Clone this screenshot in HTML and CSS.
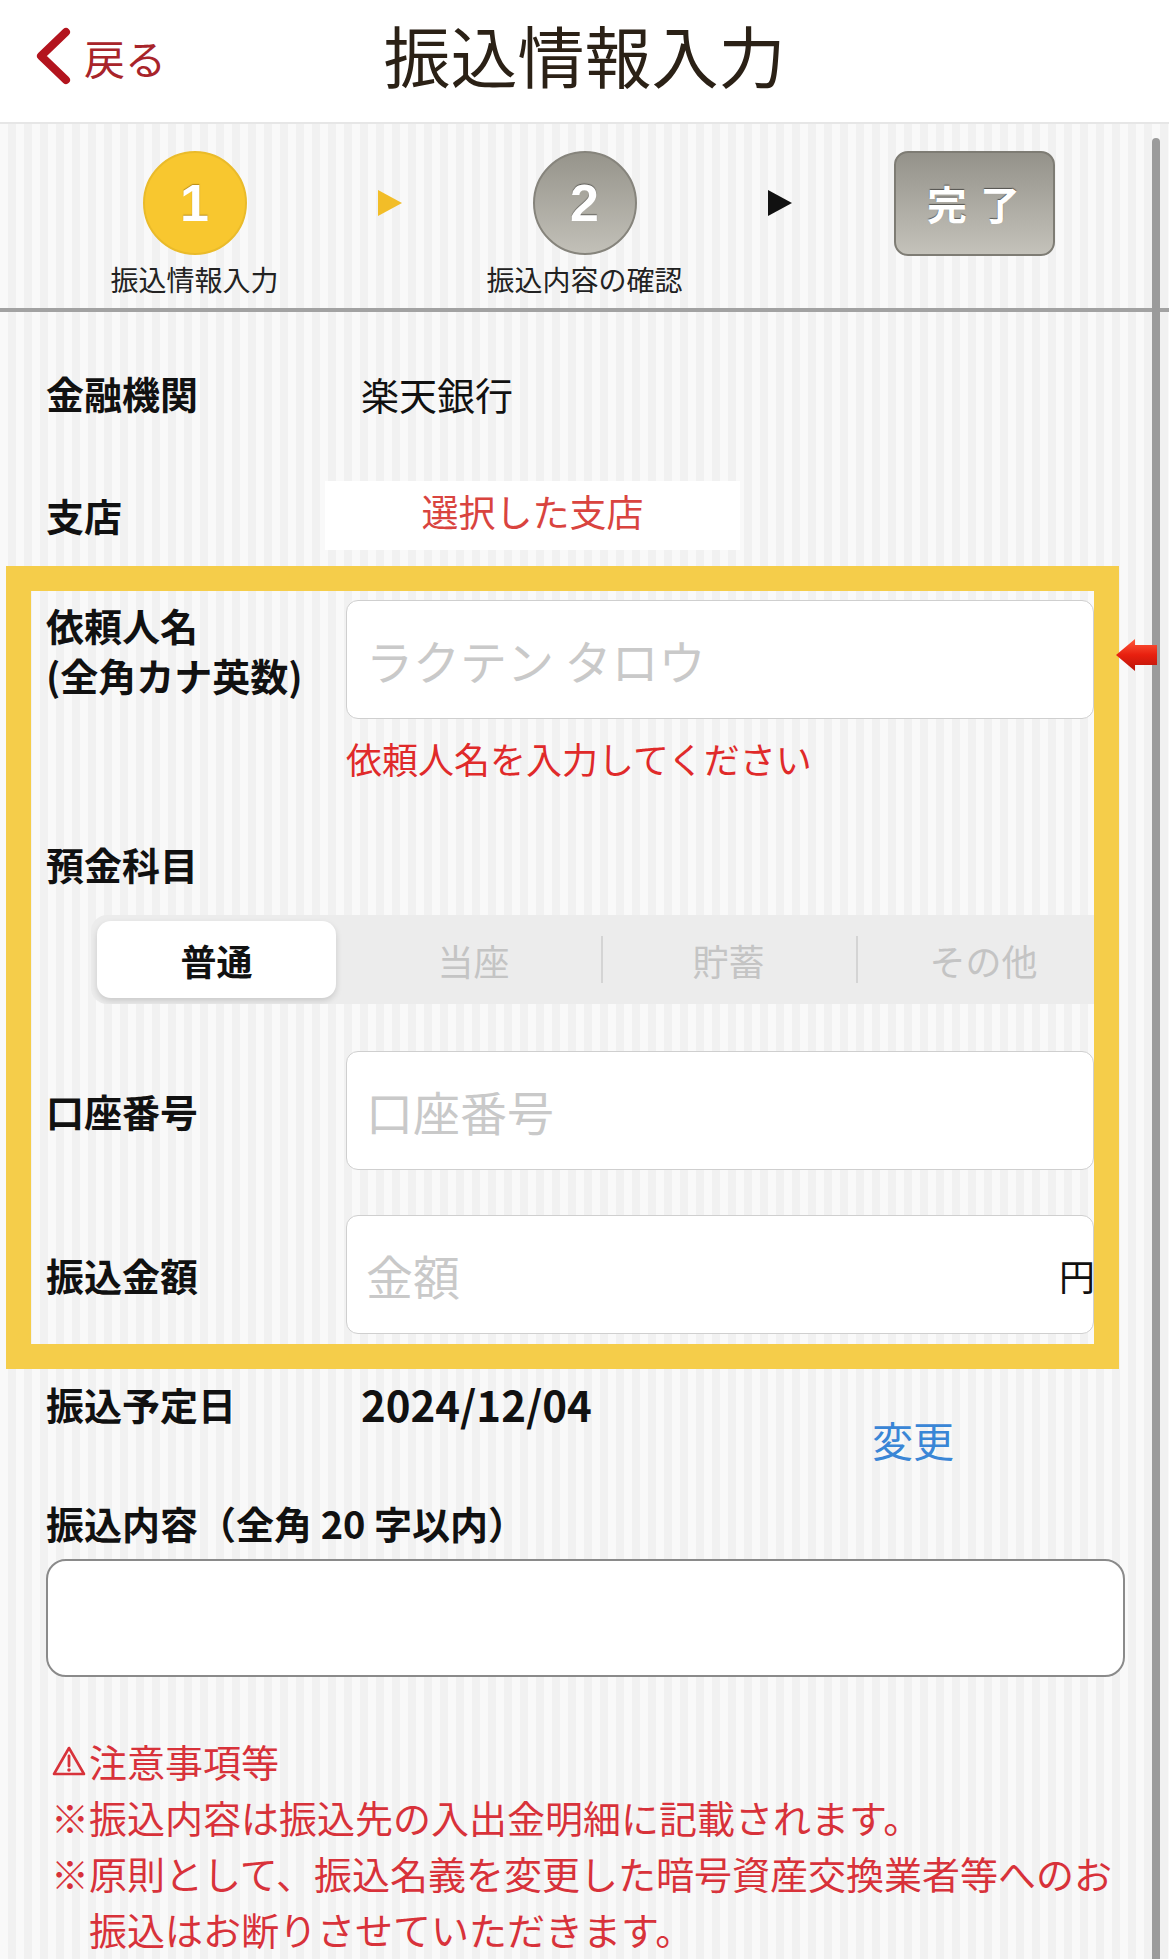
FILE: index.html
```html
<!DOCTYPE html>
<html lang="ja">
<head>
    <meta charset="UTF-8">
    <meta name="viewport" content="width=device-width, initial-scale=1.0">
    <title>振込情報入力</title>
    <link rel="stylesheet" href="styles.css">
</head>
<body>
    <header class="topbar">
        <a class="back" href="#">
            <svg class="back-icon" width="40" height="60" viewBox="0 0 40 60">
                <path d="M32 5 L7 29 L32 53" fill="none" stroke="#b3141e" stroke-width="8" stroke-linecap="round" stroke-linejoin="round"/>
            </svg>
            <span>戻る</span>
        </a>
        <h1 class="title">振込情報入力</h1>
        <div></div>
    </header>

    <div class="page">
        <div class="scrollbar"></div>

        <nav class="steps">
            <div class="step">
                <div class="step-circle current">1</div>
                <div class="step-label">振込情報入力</div>
            </div>
            <div class="step-arrow"><span class="tri current"></span></div>
            <div class="step">
                <div class="step-circle">2</div>
                <div class="step-label">振込内容の確認</div>
            </div>
            <div class="step-arrow"><span class="tri"></span></div>
            <div class="step">
                <div class="step-done">完&nbsp;了</div>
            </div>
        </nav>

        <main class="form">
            <div class="row">
                <div class="label">金融機関</div>
                <div class="value">楽天銀行</div>
            </div>
            <div class="row branch-row">
                <div class="label">支店</div>
                <div class="branch">選択した支店</div>
            </div>

            <section class="highlight">
                <svg class="pointer" width="44" height="34" viewBox="0 0 44 34">
                    <defs>
                        <linearGradient id="arrowFill" x1="0" y1="0" x2="0" y2="1">
                            <stop offset="0" stop-color="#ff5a3c"/>
                            <stop offset="0.5" stop-color="#e8200f"/>
                            <stop offset="1" stop-color="#b8140a"/>
                        </linearGradient>
                    </defs>
                    <path d="M1 17 L20 1 L20 7 L42 7 L42 27 L20 27 L20 33 Z" fill="url(#arrowFill)"/>
                </svg>

                <div class="irow name-row">
                    <div class="label">依頼人名<br>(全角カナ英数)</div>
                    <input class="field" type="text" placeholder="ラクテン タロウ">
                </div>
                <p class="error">依頼人名を入力してください</p>

                <div class="label type-label">預金科目</div>
                <div class="seg-wrap">
                    <div class="segmented">
                        <div class="seg selected">普通</div>
                        <div class="seg">当座</div>
                        <div class="seg sep">貯蓄</div>
                        <div class="seg sep">その他</div>
                    </div>
                </div>

                <div class="irow account-row">
                    <div class="label">口座番号</div>
                    <input class="field" type="text" placeholder="口座番号">
                </div>
                <div class="irow amount-row">
                    <div class="label">振込金額</div>
                    <div class="field amount">
                        <input type="text" placeholder="金額">
                        <span class="yen">円</span>
                    </div>
                </div>
            </section>

            <div class="row date-row">
                <div class="label">振込予定日</div>
                <div class="date">2024/12/04</div>
                <a class="change" href="#">変更</a>
            </div>

            <div class="label memo-label">振込内容（全角 20 字以内）</div>
            <textarea class="memo"></textarea>

            <div class="notes">
                <p class="notes-title">
                    <svg width="36" height="32" viewBox="0 0 36 32">
                        <path d="M18 3 L33 29 L3 29 Z" fill="none" stroke="#d8323a" stroke-width="2.6" stroke-linejoin="round"/>
                        <path d="M18 11 L18 21" stroke="#d8323a" stroke-width="2.8" stroke-linecap="round"/>
                        <circle cx="18" cy="25" r="1.8" fill="#d8323a"/>
                    </svg>注意事項等
                </p>
                <p class="note">※振込内容は振込先の入出金明細に記載されます。</p>
                <p class="note">※原則として、振込名義を変更した暗号資産交換業者等へのお振込はお断りさせていただきます。</p>
            </div>
        </main>
    </div>
</body>
</html>
```

FILE: styles.css
```css
body {
    margin: 0;
    font-family: "Noto Sans CJK JP", "Noto Sans", sans-serif;
    color: #111;
    background-color: #f6f6f6;
}
.topbar {
    display: grid;
    grid-template-columns: 1fr auto 1fr;
    align-items: center;
    height: 80px;
    padding: 14px 0 28px;
    background-color: white;
    border-bottom: 2px solid #e6e6e6;
}
.back {
    display: flex;
    align-items: center;
    padding-left: 34px;
    color: #a8242a;
    text-decoration: none;
    font-size: 41px;
    line-height: 60px;
}
.back-icon {
    margin-right: 10px;
}
.title {
    margin: 0 0 6px;
    font-size: 67px;
    font-weight: 400;
    line-height: 80px;
    color: #2b2116;
}
.page {
    position: relative;
    min-height: 1835px;
    background: repeating-linear-gradient(90deg, #f9f9f9 0 8px, #f1f1f1 8px 16px);
}
.scrollbar {
    position: absolute;
    left: 1152px;
    top: 14px;
    bottom: 0;
    width: 8px;
    border-radius: 4px 4px 0 0;
    background-color: #9b9b9b;
    z-index: 1;
}

/* steps */
.steps {
    display: flex;
    align-items: flex-start;
    padding: 27px 0 12px 97px;
    border-bottom: 4px solid #a2a2a2;
}
.step {
    width: 195px;
    display: flex;
    flex-direction: column;
    align-items: center;
}
.step-circle {
    width: 100px;
    height: 100px;
    border-radius: 50%;
    border: 2px solid #86847c;
    background: linear-gradient(#96948b, #c2c0b8);
    color: white;
    font-family: "Liberation Sans", Arial, sans-serif;
    font-size: 52px;
    font-weight: bold;
    line-height: 100px;
    text-align: center;
    text-shadow: 0 -1px 1px rgba(0,0,0,0.45);
}
.step-circle.current {
    border-color: #eabb2a;
    background: #f8c72f;
    text-shadow: 0 -1px 1px rgba(120,80,0,0.5);
}
.step-label {
    margin-top: 7px;
    font-size: 28px;
    line-height: 34px;
    color: #222;
    white-space: nowrap;
}
.step-arrow {
    width: 195px;
    height: 104px;
    display: flex;
    align-items: center;
    justify-content: center;
}
.tri {
    width: 0;
    height: 0;
    border-top: 13px solid transparent;
    border-bottom: 13px solid transparent;
    border-left: 24px solid #111;
}
.tri.current {
    border-left-color: #f2bd28;
}
.step-done {
    width: 157px;
    height: 101px;
    border: 2px solid #7e7c74;
    border-radius: 14px;
    background: linear-gradient(#94928a, #c4c2ba);
    color: white;
    font-size: 40px;
    font-weight: bold;
    line-height: 101px;
    text-align: center;
    letter-spacing: 2px;
    text-shadow: 0 -1px 1px rgba(0,0,0,0.5);
}

/* form */
.form {
    padding-top: 46px;
}
.label {
    font-size: 38px;
    font-weight: bold;
    line-height: 50px;
    color: #111;
}
.row {
    display: flex;
    align-items: center;
    height: 70px;
    padding-left: 46px;
}
.row .label {
    width: 315px;
}
.value {
    font-size: 38px;
}
.branch-row {
    margin-top: 52px;
}
.branch-row .label {
    width: 279px;
}
.branch {
    width: 415px;
    height: 69px;
    background-color: white;
    color: #d9443f;
    font-size: 37px;
    line-height: 60px;
    text-align: center;
}
.highlight {
    position: relative;
    box-sizing: border-box;
    width: 1113px;
    margin: 16px 0 0 6px;
    padding: 9px 0 10px 15px;
    border: 25px solid #f5cd4a;
}
.pointer {
    position: absolute;
    left: 1084px;
    top: 47px;
    z-index: 2;
}
.irow {
    display: flex;
    align-items: center;
}
.irow .label {
    width: 300px;
    flex-shrink: 0;
}
.name-row {
    align-items: flex-start;
}
.field {
    box-sizing: border-box;
    flex: 1;
    height: 119px;
    padding: 0 19px;
    border: 1px solid #cfcfcf;
    border-radius: 12px;
    background-color: white;
    font-family: inherit;
    font-size: 47px;
    color: #111;
    outline: none;
}
.field::placeholder, .amount input::placeholder {
    color: #c9c9c9;
}
.error {
    margin: 19px 0 0 300px;
    font-size: 36px;
    line-height: 40px;
    color: #e02a2a;
}
.type-label {
    margin-top: 61px;
}
.seg-wrap {
    margin: 26px 0 0 45px;
    overflow: hidden;
}
.segmented {
    display: flex;
    width: 1020px;
    height: 89px;
    border-radius: 16px;
    background-color: #ececec;
}
.seg {
    position: relative;
    width: 255px;
    display: flex;
    align-items: center;
    justify-content: center;
    font-size: 36px;
    color: #c4c4c4;
}
.seg.sep::before {
    content: "";
    position: absolute;
    left: 0;
    top: 21px;
    bottom: 21px;
    width: 2px;
    background-color: #d4d4d4;
}
.seg.selected {
    width: 239px;
    margin: 6px 10px 6px 6px;
    border-radius: 14px;
    background-color: white;
    box-shadow: 0 3px 6px rgba(0,0,0,0.15);
    color: #111;
    font-weight: bold;
}
.account-row {
    margin-top: 47px;
}
.amount-row {
    margin-top: 45px;
}
.amount {
    display: flex;
    align-items: center;
    padding-right: 0;
}
.amount input {
    flex: 1;
    min-width: 0;
    border: none;
    background: transparent;
    font-family: inherit;
    font-size: 47px;
    outline: none;
    padding: 0;
}
.yen {
    font-size: 36px;
    color: #111;
    margin-right: -2px;
}
.date-row {
    align-items: flex-start;
    height: auto;
    margin-top: 10px;
}
.date {
    width: 511px;
    font-size: 42px;
    font-weight: bold;
    line-height: 50px;
}
.change {
    margin-top: 35px;
    font-size: 41px;
    line-height: 50px;
    color: #3a86d6;
    text-decoration: none;
}
.memo-label {
    margin: 34px 0 0 46px;
}
.memo {
    display: block;
    box-sizing: border-box;
    width: 1079px;
    height: 118px;
    margin: 11px 0 0 46px;
    border: 2px solid #8a8a8a;
    border-radius: 20px;
    background-color: white;
    resize: none;
}
.notes {
    margin-top: 56px;
    padding: 0 30px 20px 51px;
    color: #d8323a;
    font-size: 38px;
    line-height: 56px;
}
.notes p {
    margin: 0;
}
.notes-title {
    display: flex;
    align-items: center;
}
.notes-title svg {
    margin-right: 2px;
}
.note {
    padding-left: 1em;
    text-indent: -1em;
}
```
